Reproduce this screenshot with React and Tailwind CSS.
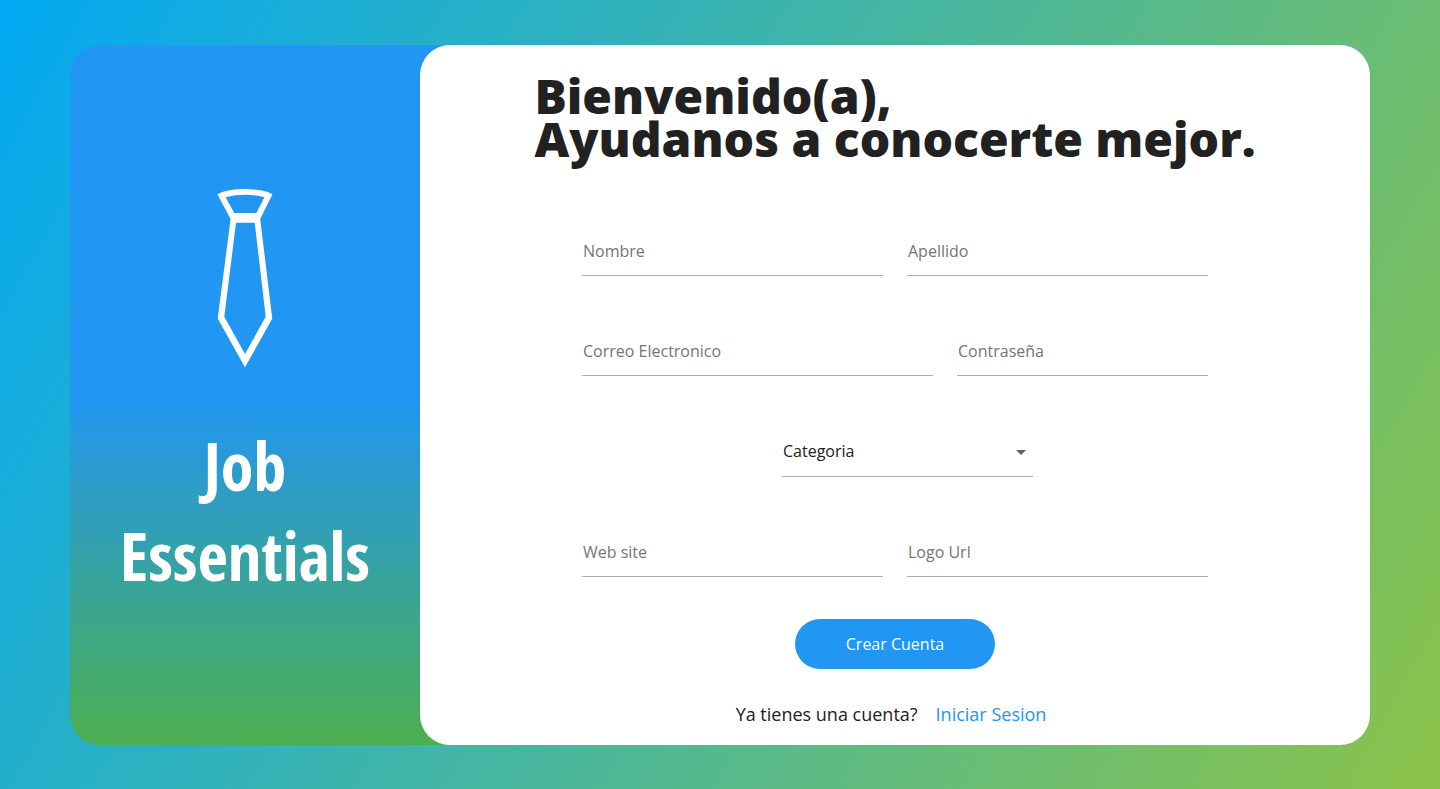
function Field({ id, label, type = "text", className }) {
  return (
    <div className={`grid ${className}`}>
      <input
        id={id}
        type={type}
        placeholder=" "
        className="peer col-start-1 row-start-1 h-[51px] w-full border-b border-[#adadad] bg-transparent px-px pt-0.5 text-base text-[#212121] outline-none"
      />
      <label
        htmlFor={id}
        className="pointer-events-none col-start-1 row-start-1 self-center justify-self-start px-px pt-0.5 text-base text-[#757575] opacity-0 peer-placeholder-shown:opacity-100"
      >
        {label}
      </label>
    </div>
  );
}

function Tie() {
  return (
    <svg viewBox="0 0 56 181" className="h-[181px] w-14" fill="#fff" fillRule="evenodd" aria-hidden="true">
      <path d="M.4 7.200Q5 4.600 11 3.400Q28 .8 45 3.400Q51 4.600 55.500 7.200L43.200 32L55.300 131.600L28 180.300L.7 131.600L13.600 32ZM8.700 10.200L17.300 26H39.300L47.400 10.200Q28 5.400 8.700 10.200ZM19 35.700L7.300 129.700L28 167L48.700 129.700L37.700 35.700Z" />
    </svg>
  );
}

export default function App() {
  return (
    <main className="flex min-h-screen items-center justify-center bg-[linear-gradient(119deg,#03a9f4,#8bc34a)] px-[70px] py-11 font-['Open_Sans',sans-serif] text-[#212121]">
      <div className="flex min-h-[700px] w-full max-w-[1300px] rounded-[30px] bg-[linear-gradient(to_bottom,#2196f3_50%,#4caf50)]">
        <aside className="flex w-[350px] shrink-0 flex-col items-center pt-[142px] text-white">
          <Tie />
          <h2 className="mt-[52px] text-center font-['Open_Sans_Condensed','Open_Sans',sans-serif] text-[66px] leading-[90px] font-bold">
            Job<br />Essentials
          </h2>
        </aside>
        <section className="flex flex-1 flex-col items-center rounded-[30px] bg-white">
          <h1 className="mt-[29px] text-5xl leading-[43px] font-extrabold">
            Bienvenido(a),<br />Ayudanos a conocerte mejor.
          </h1>
          <form className="mt-16 flex w-full flex-col items-center" onSubmit={(e) => e.preventDefault()}>
            <div className="flex w-full max-w-[626px] flex-col gap-[49px] pt-px">
              <div className="flex gap-6">
                <Field id="nombre" label="Nombre" className="flex-1" />
                <Field id="apellido" label="Apellido" className="flex-1" />
              </div>
              <div className="flex gap-6">
                <Field id="correo" label="Correo Electronico" type="email" className="flex-1" />
                <Field id="clave" label="Contraseña" type="password" className="w-[251px]" />
              </div>
              <div className="ml-[200px] grid w-[251px]">
                <select
                  id="categoria"
                  aria-label="Categoria"
                  className="col-start-1 row-start-1 h-[52px] w-full appearance-none border-b border-[#adadad] bg-transparent px-px pt-0.5 text-base outline-none"
                >
                  <option value="">Categoria</option>
                </select>
                <svg viewBox="0 0 10 5" className="pointer-events-none col-start-1 row-start-1 mt-1 mr-[7px] h-[5px] w-2.5 self-center justify-self-end" fill="#616161" aria-hidden="true">
                  <path d="M0 0H10L5 5Z" />
                </svg>
              </div>
              <div className="flex gap-6">
                <Field id="web" label="Web site" type="url" className="flex-1" />
                <Field id="logo" label="Logo Url" type="url" className="flex-1" />
              </div>
            </div>
            <button type="submit" className="mt-[42px] h-[50px] w-[200px] rounded-full bg-[#2196f3] text-base text-white">
              Crear Cuenta
            </button>
          </form>
          <p className="mt-[31px] mr-2 text-lg">
            Ya tienes una cuenta?
            <a href="#iniciar" className="ml-[18px] text-[#2196f3]">Iniciar Sesion</a>
          </p>
        </section>
      </div>
    </main>
  );
}
